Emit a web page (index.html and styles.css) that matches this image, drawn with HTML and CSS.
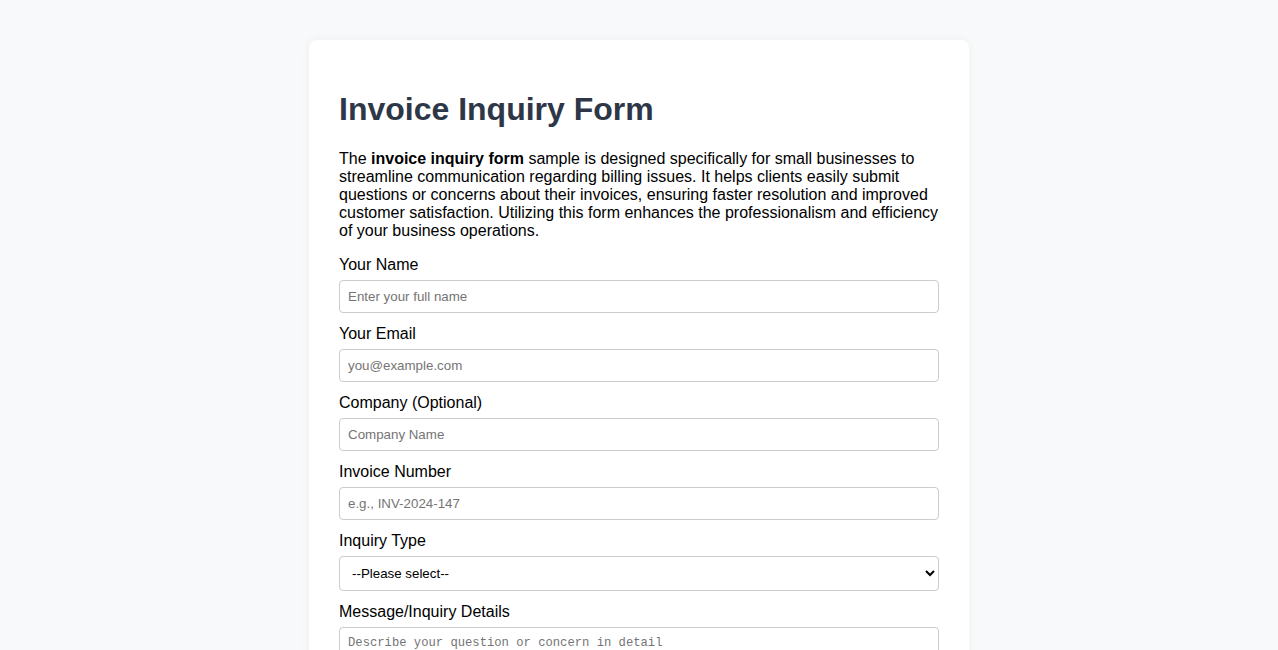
FILE: index.html
```html
<!DOCTYPE html>
<html lang="en">
<head>
    <title>Invoice Inquiry Form</title>
    <meta charset="UTF-8">
    <meta name="viewport" content="width=device-width, initial-scale=1.0">
    <link rel="stylesheet" href="styles.css">
</head>
<body>
    <div class="container">
        <h1 class="title">Invoice Inquiry Form</h1>
        <p class="intro">The <strong>invoice inquiry form</strong> sample is designed specifically for small businesses to streamline communication regarding billing issues. It helps clients easily submit questions or concerns about their invoices, ensuring faster resolution and improved customer satisfaction. Utilizing this form enhances the professionalism and efficiency of your business operations.</p>

        <form class="inquiry">
            <div class="group">
                <label for="name">Your Name</label>
                <input type="text" id="name" placeholder="Enter your full name">
            </div>
            <div class="group">
                <label for="email">Your Email</label>
                <input type="email" id="email" placeholder="you@example.com">
            </div>
            <div class="group">
                <label for="company">Company (Optional)</label>
                <input type="text" id="company" placeholder="Company Name">
            </div>
            <div class="group">
                <label for="invoice">Invoice Number</label>
                <input type="text" id="invoice" placeholder="e.g., INV-2024-147">
            </div>
            <div class="group">
                <label for="type">Inquiry Type</label>
                <select id="type">
                    <option value="">--Please select--</option>
                    <option>Billing Error</option>
                    <option>Payment Status</option>
                    <option>Refund Request</option>
                    <option>Other</option>
                </select>
            </div>
            <div class="group">
                <label for="message">Message/Inquiry Details</label>
                <textarea id="message" rows="5" placeholder="Describe your question or concern in detail"></textarea>
            </div>
            <button type="submit" class="button">Submit Inquiry</button>
        </form>
    </div>
</body>
</html>
```

FILE: styles.css
```css
:root{
    --bg: #f8f9fa;
    --card: #ffffff;
    --text: #000000;
    --title: #2d3748;
    --border: #cccccc;
    --placeholder: #757575;
}

html, body{
    margin: 0;
    padding: 0;
    background-color: var(--bg);
    color: var(--text);
    font-family: "Liberation Sans", Arial, sans-serif;
    font-size: 16px;
}

body{
    padding: 40px 20px;
}

.container{
    max-width: 600px;
    margin: 0 auto;
    padding: 30px;
    background-color: var(--card);
    border-radius: 8px;
    box-shadow: 0 0 10px rgba(0, 0, 0, 0.05);
}

.title{
    color: var(--title);
    font-size: 32px;
    margin: 21px 0 22px;
}

.intro{
    margin: 16px 0;
}

.group{
    margin-bottom: 12px;
}

.group label{
    display: block;
    margin-bottom: 6px;
}

.group input,
.group select,
.group textarea{
    display: block;
    width: 100%;
    box-sizing: border-box;
    padding: 8px;
    border: 1px solid var(--border);
    border-radius: 4px;
    font-family: "Liberation Sans", Arial, sans-serif;
    font-size: 13.333px;
    background-color: #ffffff;
    color: var(--text);
}

.group textarea{
    font-family: "Liberation Mono", "Courier New", monospace;
    font-size: 12.2px;
    resize: vertical;
}

.group input::placeholder,
.group textarea::placeholder{
    color: var(--placeholder);
}

.button{
    background-color: #2d3748;
    color: #ffffff;
    border: none;
    border-radius: 4px;
    padding: 10px 20px;
    font-size: 16px;
}
```
